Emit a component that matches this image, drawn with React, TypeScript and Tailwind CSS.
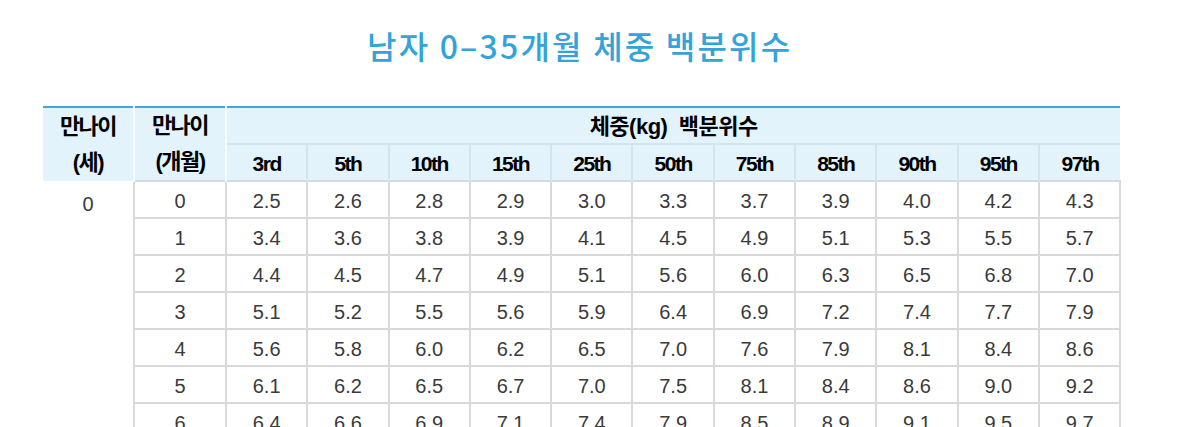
import React from 'react';

const pcts = ['3rd', '5th', '10th', '15th', '25th', '50th', '75th', '85th', '90th', '95th', '97th'];

const rows: string[][] = [
    ['2.5', '2.6', '2.8', '2.9', '3.0', '3.3', '3.7', '3.9', '4.0', '4.2', '4.3'],
    ['3.4', '3.6', '3.8', '3.9', '4.1', '4.5', '4.9', '5.1', '5.3', '5.5', '5.7'],
    ['4.4', '4.5', '4.7', '4.9', '5.1', '5.6', '6.0', '6.3', '6.5', '6.8', '7.0'],
    ['5.1', '5.2', '5.5', '5.6', '5.9', '6.4', '6.9', '7.2', '7.4', '7.7', '7.9'],
    ['5.6', '5.8', '6.0', '6.2', '6.5', '7.0', '7.6', '7.9', '8.1', '8.4', '8.6'],
    ['6.1', '6.2', '6.5', '6.7', '7.0', '7.5', '8.1', '8.4', '8.6', '9.0', '9.2'],
    ['6.4', '6.6', '6.9', '7.1', '7.4', '7.9', '8.5', '8.9', '9.1', '9.5', '9.7'],
    ['6.7', '6.8', '7.2', '7.4', '7.7', '8.3', '8.9', '9.2', '9.4', '9.8', '10.0'],
];

const head = "font-['Liberation_Sans','Noto_Sans_CJK_KR',sans-serif] font-bold text-black";

export default function App() {
    return (
        <div className="h-[427px] w-[1179px] overflow-hidden bg-white">
            {/* title */}
            <h1 className="pt-[22px] pl-[367px] font-['Noto_Sans_CJK_KR',sans-serif] text-[32px] leading-[46px] font-medium text-[#33a3da] tracking-[2.2px]">
                남자 0–35개월 체중 백분위수
            </h1>

            <table className="mt-[38px] ml-[43px] table-fixed border-collapse border-t-[2px] border-t-[#45a6d6]">
                <colgroup>
                    <col className="w-[91px]" />
                    <col className="w-[92px]" />
                    {pcts.map((p) => <col key={p} className="w-[81.3px]" />)}
                </colgroup>
                <thead className="bg-[#e2f3fb]">
                    <tr className="h-[37px]">
                        <th rowSpan={2} className={`${head} text-[22px] leading-[36px] tracking-[-1.5px] border-r-[2px] border-r-[#f4fafd]`}>
                            만나이<br />(세)
                        </th>
                        <th rowSpan={2} className={`${head} text-[22px] leading-[36px] tracking-[-1.5px] border-r-[2px] border-r-[#f4fafd]`}>
                            만나이<br />(개월)
                        </th>
                        <th colSpan={11} className={`${head} text-[22px] tracking-[-0.5px] pt-[2px]`}>
                            체중(kg)&nbsp; 백분위수
                        </th>
                    </tr>
                    <tr className="h-[37px]">
                        {pcts.map((p) => (
                            <th key={p} className={`${head} text-[21px] tracking-[-1.5px] pt-[3px] border-t-[2px] border-t-[#d3e4ec] border-l-[2px] border-l-[#d3e4ec] first:border-l-0`}>
                                {p}
                            </th>
                        ))}
                    </tr>
                </thead>
                <tbody className="font-['Liberation_Sans',sans-serif] text-[20px] text-[#3a3a3a]">
                    {rows.map((r, i) => (
                        <tr key={i} className="h-[37px]">
                            {i === 0 && (
                                <td rowSpan={rows.length} className="align-top text-center pt-[8px] border-r-[2px] border-r-[#d9d9d9]">
                                    0
                                </td>
                            )}
                            <td className="text-center pt-[3px] border-[2px] border-[#d9d9d9] border-l-0">{i}</td>
                            {r.map((v, j) => (
                                <td key={j} className="text-center pt-[3px] border-[2px] border-[#d9d9d9]">{v}</td>
                            ))}
                        </tr>
                    ))}
                </tbody>
            </table>
        </div>
    );
}
